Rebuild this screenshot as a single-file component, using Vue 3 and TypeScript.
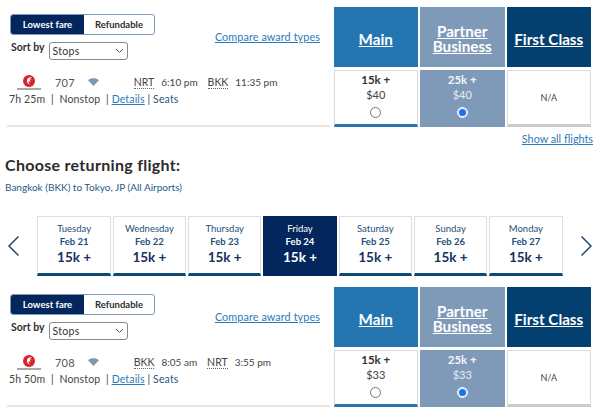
<script setup lang="ts">
interface FlightBlock {
  num: string
  from: string
  dep: string
  to: string
  arr: string
  duration: string
  price: string
}

const blocks: FlightBlock[] = [
  { num: '707', from: 'NRT', dep: '6:10 pm', to: 'BKK', arr: '11:35 pm', duration: '7h 25m', price: '$40' },
  { num: '708', from: 'BKK', dep: '8:05 am', to: 'NRT', arr: '3:55 pm', duration: '5h 50m', price: '$33' }
]

const days = [
  { day: 'Tuesday', date: 'Feb 21' },
  { day: 'Wednesday', date: 'Feb 22' },
  { day: 'Thursday', date: 'Feb 23' },
  { day: 'Friday', date: 'Feb 24', active: true },
  { day: 'Saturday', date: 'Feb 25' },
  { day: 'Sunday', date: 'Feb 26' },
  { day: 'Monday', date: 'Feb 27' }
]
</script>

<template>
  <div class="page">
    <template v-for="(b, i) in blocks" :key="b.num">
      <section class="results">
        <div class="left">
          <div class="fare-toggle">
            <span class="opt on">Lowest fare</span>
            <span class="opt">Refundable</span>
          </div>
          <div class="controls">
            <div class="sort">
              <span class="sort-label">Sort by</span>
              <div class="select">
                <span>Stops</span>
                <svg width="9" height="6" viewBox="0 0 9 6"><path d="M1 1l3.5 3.5L8 1" fill="none" stroke="#555" stroke-width="1" /></svg>
              </div>
            </div>
            <a class="compare">Compare award types</a>
          </div>
          <div class="flight-line">
            <span class="logo">
              <svg width="26" height="15" viewBox="0 0 26 15">
                <circle cx="13" cy="6" r="6" fill="#d8232a" />
                <path d="M15.600 2.300c-2.600-.5-4.800 1.300-4.700 3.700.1 1.700 1.300 3 2.900 3.500-1.100-1.100-1.500-2.500-1-3.700.5 1 1.300 1.300 2.200.9-1-.4-1.200-1.200-.9-1.900.7.200 1.500 0 2-.7-.5.100-1-.1-1.200-.5.400-.4.600-.9.700-1.300z" fill="#fff" />
                <circle cx="14.600" cy="4" r=".8" fill="#d8232a" />
                <rect x="1" y="13.500" width="24" height="1" fill="#555" />
              </svg>
            </span>
            <span class="num">{{ b.num }}</span>
            <svg class="wifi" width="11" height="8" viewBox="0 0 11 8"><path d="M0 2.200C3 -.4 8 -.4 11 2.200L5.500 8z" fill="#7d9ab5" /></svg>
            <span class="times">
              <abbr>{{ b.from }}</abbr><span>{{ b.dep }}</span>
              <abbr class="second">{{ b.to }}</abbr><span>{{ b.arr }}</span>
            </span>
          </div>
          <div class="meta">
            {{ b.duration }}&nbsp; | &nbsp;Nonstop &nbsp;| <a class="details">Details</a> | <span class="seats">Seats</span>
          </div>
        </div>

        <div class="fares">
          <div class="fare-col">
            <div class="head main"><a>Main</a></div>
            <div class="cell under-main">
              <b>15k +</b>
              <span>{{ b.price }}</span>
              <i class="radio"></i>
            </div>
          </div>
          <div class="fare-col">
            <div class="head partner"><a>Partner Business</a></div>
            <div class="cell selected">
              <b>25k +</b>
              <span>{{ b.price }}</span>
              <i class="radio checked"></i>
            </div>
          </div>
          <div class="fare-col">
            <div class="head first"><a>First Class</a></div>
            <div class="cell na">N/A</div>
          </div>
        </div>
      </section>

      <template v-if="i === 0">
        <div class="show-all"><a>Show all flights</a></div>
        <h2>Choose returning flight:</h2>
        <p class="route">Bangkok (BKK) to Tokyo, JP (All Airports)</p>
        <div class="dates">
          <svg width="13" height="22" viewBox="0 0 13 22"><path d="M11.500 1.500L2 11l9.500 9.500" fill="none" stroke="#1f4e79" stroke-width="1.500" /></svg>
          <div class="date-list">
            <div v-for="d in days" :key="d.date" class="date" :class="{ active: d.active }">
              <span class="d-day">{{ d.day }}</span>
              <span class="d-date">{{ d.date }}</span>
              <span class="d-price">15k +</span>
            </div>
          </div>
          <svg width="13" height="22" viewBox="0 0 13 22"><path d="M1.500 1.500L11 11l-9.500 9.500" fill="none" stroke="#1f4e79" stroke-width="1.500" /></svg>
        </div>
      </template>
    </template>
  </div>
</template>

<style>
html, body { margin: 0; background: #fff; }
</style>

<style scoped>
.page {
  width: 600px;
  height: 411px;
  overflow: hidden;
  padding-top: 7px;
  box-sizing: border-box;
  font-family: Lato, "Liberation Sans", sans-serif;
  color: #2e2e2e;
}

.results {
  display: flex;
  justify-content: space-between;
  padding: 0 9px 0 7px;
}

.left {
  width: 323px;
  height: 120px;
  border-bottom: 2px solid #e6e6e6;
  box-sizing: border-box;
  padding-top: 7px;
}

.fare-toggle {
  display: flex;
  width: 145px;
  height: 21px;
  margin-left: 3px;
  border: 1px solid #7f9ab8;
  border-radius: 3px;
  box-sizing: border-box;
  overflow: hidden;
  font-size: 9.5px;
  font-weight: 700;
}

.opt {
  flex: 1;
  display: flex;
  align-items: center;
  justify-content: center;
}

.opt.on {
  flex: 0 0 73px;
  background: #03275c;
  color: #fff;
}

.controls {
  display: flex;
  justify-content: space-between;
  height: 22px;
  margin-top: 3px;
  padding: 0 10px 0 4px;
}

.sort {
  display: flex;
  align-items: flex-start;
  gap: 4px;
  margin-top: 4px;
}

.sort-label {
  margin-top: -2px;
  font-size: 10.5px;
  font-weight: 700;
  line-height: 15px;
}

.select {
  display: flex;
  align-items: center;
  justify-content: space-between;
  width: 79px;
  height: 18px;
  padding: 0 3px;
  box-sizing: border-box;
  border: 1px solid #8a8a8a;
  border-radius: 3px;
  font-size: 10.5px;
  letter-spacing: 0.3px;
  color: #333;
}

.compare, .show-all a {
  color: #2b7bb9;
  text-decoration: underline;
  font-size: 10.8px;
}

.compare {
  margin-top: -8px;
  line-height: 14px;
  letter-spacing: 0.1px;
}

.flight-line {
  display: flex;
  align-items: center;
  height: 20px;
  margin-top: 12px;
  font-size: 10px;
  color: #444;
}

.logo {
  display: flex;
  margin-left: 9px;
  width: 26px;
  height: 15px;
}

.num {
  margin-left: 13px;
  font-size: 11px;
  letter-spacing: 0.2px;
  color: #555;
}

.wifi {
  margin-left: 13px;
}

.times {
  display: flex;
  gap: 7px;
  margin-left: 35px;
}

abbr {
  border-bottom: 1px dotted #666;
  line-height: 12px;
  font-size: 10.5px;
}

abbr.second {
  margin-left: 3px;
}

.meta {
  margin-top: 0;
  padding-left: 2px;
  font-size: 10.5px;
  line-height: 14px;
  letter-spacing: 0.15px;
  color: #444;
}

.details {
  color: #2b7bb9;
  text-decoration: underline;
}

.seats {
  color: #2a5580;
}

.fares {
  display: flex;
  gap: 2px;
  margin-top: 0;
}

.fare-col {
  width: 84.500px;
  display: flex;
  flex-direction: column;
  gap: 3px;
}

.head {
  height: 60px;
  box-sizing: border-box;
  padding-top: 4px;
  display: flex;
  align-items: center;
  justify-content: center;
  text-align: center;
  color: #fff;
  font-size: 15.200px;
  font-weight: 700;
  line-height: 15px;
}

.head a {
  text-decoration: underline;
}

.head.main { background: #2475b0; }
.head.partner { background: #7f9ab8; }
.head.first { background: #03406f; }

.cell {
  height: 57px;
  box-sizing: border-box;
  border: 1px solid #dcdcdc;
  border-bottom: 3px solid #ccc;
  display: flex;
  flex-direction: column;
  align-items: center;
  padding-top: 1px;
  font-size: 11px;
  line-height: 15px;
  color: #444;
}

.cell b {
  font-size: 11.500px;
  color: #333;
}

.cell span {
  margin-top: 0;
}

.under-main {
  border-bottom-color: #2475b0;
}

.selected {
  background: #7f9ab8;
  border-color: #7f9ab8;
  color: #e6ecf2;
}

.selected b {
  color: #f2f5f8;
}

.na {
  justify-content: center;
  padding-top: 0;
  font-size: 9px;
}

.radio {
  width: 9px;
  height: 9px;
  margin-top: 5px;
  border: 1px solid #777;
  border-radius: 50%;
  background: #fff;
}

.radio.checked {
  border: 1px solid #fff;
  background: #1a73e8;
  box-shadow: inset 0 0 0 1px #fff;
}

.show-all {
  display: flex;
  justify-content: flex-end;
  padding-right: 7px;
  margin-top: 5px;
  line-height: 14px;
}

h2 {
  margin: 9px 0 0 5px;
  font-size: 16px;
  font-weight: 700;
  line-height: 20px;
  letter-spacing: 0.3px;
  color: #2b2b2b;
}

.route {
  margin: 5px 0 0 5px;
  font-size: 10px;
  line-height: 14px;
  color: #1f5a85;
}

.dates {
  display: flex;
  align-items: center;
  justify-content: space-between;
  height: 60px;
  margin-top: 22px;
  padding: 0 7px;
  margin-bottom: 11px;
}

.date-list {
  display: flex;
  gap: 2px;
}

.date {
  width: 73.300px;
  height: 60px;
  box-sizing: border-box;
  border: 1px solid #dedede;
  border-bottom: 3px solid #0a4a75;
  display: flex;
  flex-direction: column;
  align-items: center;
  padding-top: 5px;
  color: #1f4e79;
}

.d-day {
  font-size: 9.500px;
  line-height: 13px;
}

.d-date {
  font-size: 9.500px;
  font-weight: 700;
  line-height: 13px;
}

.d-price {
  font-size: 13.500px;
  font-weight: 700;
  line-height: 18px;
  color: #14315c;
}

.date.active {
  background: #03275c;
  border-color: #03275c;
  color: #fff;
}

.date.active .d-price {
  color: #fff;
}
</style>
